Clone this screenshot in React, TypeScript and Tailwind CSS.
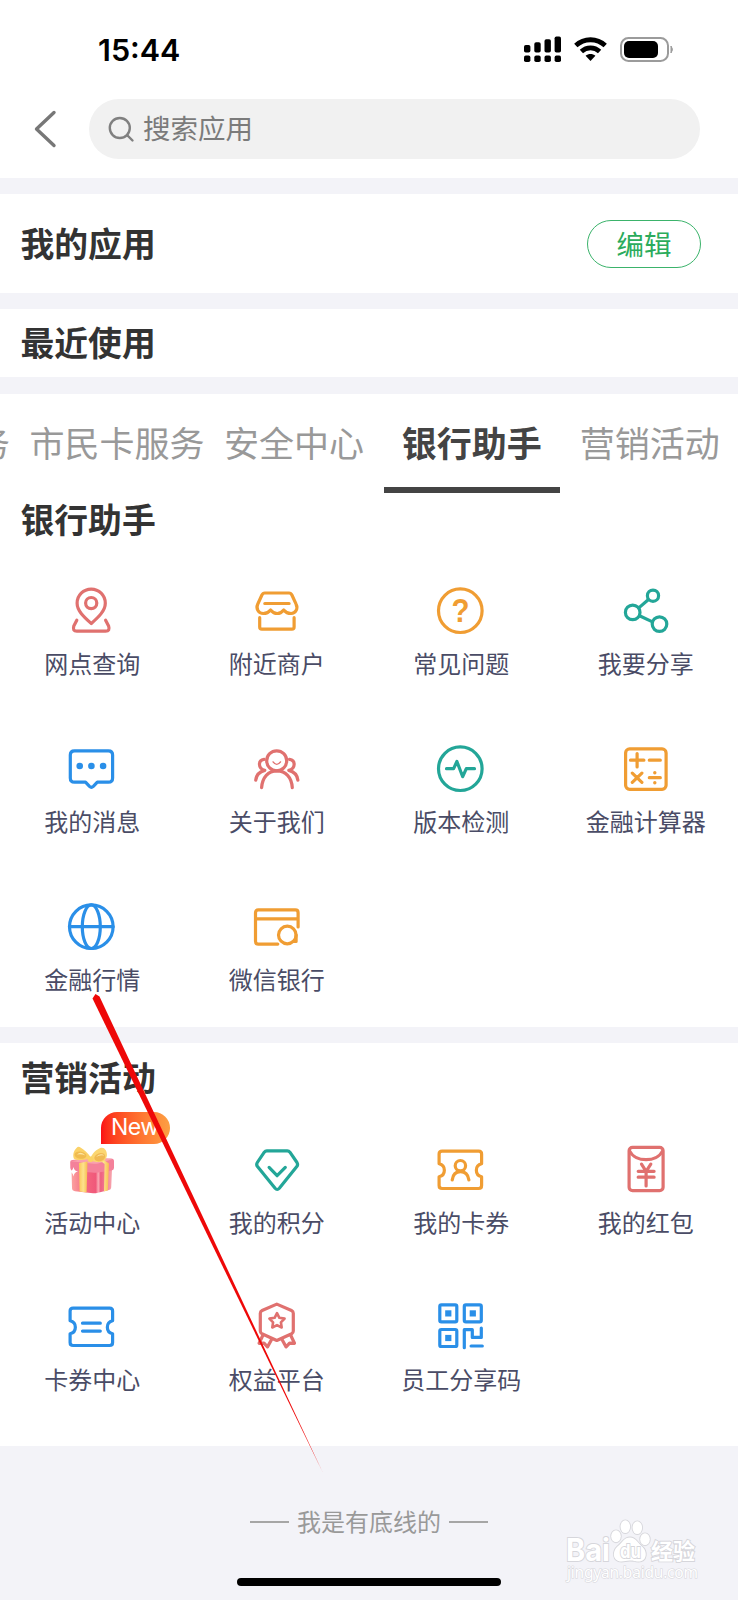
import type { ReactNode } from "react";
import clsx from "clsx";

type AppItem = {
  name: string;
  color: string;
  icon: ReactNode;
  isNew?: boolean;
};

const RED = "text-[#e0716f]";
const ORANGE = "text-[#f09d33]";
const GREEN = "text-[#23a698]";
const BLUE = "text-[#2a8fe8]";

const ticketOutline =
  "M5.8 5.4H42.3Q45.3 5.4 45.3 8.4V18C38.3 19.5 38.3 29.5 45.3 31V39.8Q45.3 42.8 42.3 42.8H5.8Q2.8 42.8 2.8 39.8V31C9.8 29.5 9.8 19.5 2.8 18V8.4Q2.8 5.4 5.8 5.4Z";

const bankItems: AppItem[] = [
  {
    name: "网点查询",
    color: RED,
    icon: (
      <>
        <path d="M24 36.8C17 30.5 9.8 24.2 9.8 16.5a14 14 0 0 1 28.2 0C38 24.2 31 30.5 24 36.8z" />
        <circle cx="23.9" cy="16.4" r="5.6" />
        <path d="M9.5 33.5L6.5 39.3Q5 44.5 9.5 44.5H38.3Q43 44.5 41.3 39.3L38.3 33.5" />
      </>
    ),
  },
  {
    name: "附近商户",
    color: ORANGE,
    icon: (
      <>
        <path d="M12.5 6.3H36.7Q38.7 6.3 39.6 8.3L43.8 17.5C46 22 43.2 26.8 38.8 26.8C35.5 26.8 33.3 25.6 31.4 23.2C29.5 25.6 27.5 26.8 24.9 26.8C22.3 26.8 20.3 25.6 18.3 23.2C16.4 25.6 14.2 26.8 10.9 26.8C6.3 26.8 3.3 22 5.4 17.5L9.6 8.3Q10.5 6.3 12.5 6.3Z" />
        <path d="M12.5 16.8H36.8M7.4 31V40.3Q7.4 42.5 9.6 42.5H39.6Q41.8 42.5 41.8 40.3V31" />
      </>
    ),
  },
  {
    name: "常见问题",
    color: ORANGE,
    icon: (
      <>
        <circle cx="24" cy="24" r="21.8" />
        <text
          x="24.2"
          y="35.6"
          textAnchor="middle"
          fontSize="33"
          fontWeight="700"
          fontFamily="Liberation Sans, sans-serif"
          fill="currentColor"
          stroke="none"
          textLength="18"
          lengthAdjust="spacingAndGlyphs"
        >
          ?
        </text>
      </>
    ),
  },
  {
    name: "我要分享",
    color: GREEN,
    icon: (
      <>
        <circle cx="11.4" cy="25.7" r="7.3" />
        <circle cx="31.7" cy="9" r="5.6" />
        <circle cx="38.2" cy="37.4" r="7.3" />
        <path d="M17.5 21.2L26.9 13M18.2 29L31.2 35.2" />
      </>
    ),
  },
  {
    name: "我的消息",
    color: BLUE,
    icon: (
      <>
        <path d="M7.2 6.2H41.1Q45.3 6.2 45.3 10.4V33.3Q45.3 37.5 41.1 37.5H30L26 41.7Q24.1 43.5 22.2 41.7L18.2 37.5H7.2Q3 37.5 3 33.3V10.4Q3 6.2 7.2 6.2Z" />
        <g fill="currentColor" stroke="none">
          <circle cx="12.4" cy="21.3" r="3.3" />
          <circle cx="24.1" cy="21.3" r="3.3" />
          <circle cx="35.8" cy="21.3" r="3.3" />
        </g>
      </>
    ),
  },
  {
    name: "关于我们",
    color: RED,
    icon: (
      <>
        <circle cx="24.4" cy="16.1" r="10" />
        <path d="M20.8 17.2Q24.4 22.2 28.2 17.2" strokeWidth="1.4" />
        <path d="M9.3 43C10 32.5 16 26.2 24.6 26.2S39.4 32.5 40 43" />
        <path d="M11.8 14.7C5.5 15.5 5.5 24 12.5 25.7C7 27 4 30.5 3.4 35.5M37.2 14.7C43.5 15.5 43.5 24 36.5 25.7C42 27 45 30.5 45.6 35.5" />
      </>
    ),
  },
  {
    name: "版本检测",
    color: GREEN,
    icon: (
      <>
        <circle cx="24" cy="24" r="21.8" />
        <path d="M10.2 24H17.3L20.6 16.8L26.4 32L30 24H38.2" />
      </>
    ),
  },
  {
    name: "金融计算器",
    color: ORANGE,
    icon: (
      <>
        <rect x="4.3" y="4.2" width="40.5" height="40.4" rx="4" />
        <path d="M9.2 15.5H22.6M15.8 8.8V22.2M28 15.5H39M11 28.4L20.6 37.6M20.6 28.4L11 37.6M28 33H39" />
        <g fill="currentColor" stroke="none">
          <circle cx="33.5" cy="28" r="1.7" />
          <circle cx="33.5" cy="38" r="1.7" />
        </g>
      </>
    ),
  },
  {
    name: "金融行情",
    color: BLUE,
    icon: (
      <>
        <circle cx="24" cy="24" r="21.8" />
        <ellipse cx="24" cy="24" rx="9" ry="21.8" />
        <path d="M2.2 24H45.8" />
      </>
    ),
  },
  {
    name: "微信银行",
    color: ORANGE,
    icon: (
      <>
        <path d="M45.8 24.3V10Q45.8 7.2 43 7.2H6Q3.2 7.2 3.2 10V38.6Q3.2 41.4 6 41.4H25.5M3.2 16.2H45.8" />
        <circle cx="35" cy="32.3" r="8.8" />
        <path d="M43.8 32.3V38.8H41" />
      </>
    ),
  },
];

const marketingItems: AppItem[] = [
  { name: "活动中心", color: RED, icon: null, isNew: true },
  {
    name: "我的积分",
    color: GREEN,
    icon: (
      <>
        <path d="M14.5 5.2H35Q36.6 5.2 37.6 6.5L44.7 16.8Q46 18.8 44.5 20.8L27 42.6Q24.9 45 22.8 42.6L5.2 20.8Q3.7 18.8 5 16.8L12 6.5Q13 5.2 14.5 5.2Z" />
        <path d="M16.8 21.7L24.8 30L33 21.7" />
      </>
    ),
  },
  {
    name: "我的卡券",
    color: ORANGE,
    icon: (
      <>
        <path d={ticketOutline} />
        <circle cx="24.1" cy="20" r="5.2" />
        <path d="M15.9 34.3C16.6 28.8 19.8 26 24.2 26S31.8 28.8 32.6 34.3" />
      </>
    ),
  },
  {
    name: "我的红包",
    color: RED,
    icon: (
      <>
        <rect x="7.8" y="1.6" width="34" height="43.4" rx="3.4" />
        <path d="M8.4 5.4C14 16.8 35.5 16.8 41.2 5.4" />
        <path d="M20.2 18.5L24.8 25.6L29.5 18.5M24.8 25.6V40.2M16.9 25.6H32.8M16.9 31.5H32.8" />
      </>
    ),
  },
  {
    name: "卡券中心",
    color: BLUE,
    icon: (
      <>
        <path d={ticketOutline} />
        <path d="M15.2 20.5H33M15.2 28.4H33" />
      </>
    ),
  },
  {
    name: "权益平台",
    color: RED,
    icon: (
      <>
        <path d="M24.5 1.4L39.2 7.8Q41 8.6 41 10.6V28.4Q41 30.2 39.4 31L24.5 37.8L9.6 31Q8 30.2 8 28.4V10.6Q8 8.6 9.8 7.8Z" />
        <path
          d="M24.7 10.4L27.1 15.1L32.3 15.9L28.6 19.6L29.4 24.8L24.7 22.4L20 24.8L20.8 19.6L17.1 15.9L22.3 15.1Z"
          strokeWidth="2.6"
        />
        <path d="M10.5 32.8L6.8 40.6L11.7 40.4L15.2 44.2L19.3 36.8M38.5 32.8L42.2 40.6L37.3 40.4L33.8 44.2L29.7 36.8" />
      </>
    ),
  },
  {
    name: "员工分享码",
    color: BLUE,
    icon: (
      <>
        <rect x="3.5" y="2.2" width="17" height="17" rx="1.6" />
        <rect x="28" y="2.2" width="17" height="17" rx="1.6" />
        <rect x="3.5" y="26.8" width="17" height="17" rx="1.6" />
        <path d="M28 45V27H36V34.7H45V25.4M34.8 43.3H46" />
        <g fill="currentColor" stroke="none">
          <rect x="8.9" y="7.6" width="6.2" height="6.2" />
          <rect x="33.4" y="7.6" width="6.2" height="6.2" />
          <rect x="8.9" y="32.2" width="6.2" height="6.2" />
        </g>
      </>
    ),
  },
];

function GiftIcon() {
  return (
    <svg viewBox="0 0 48 48" className="size-12">
      <defs>
        <linearGradient id="giftBox" x1="0" x2="1">
          <stop offset="0" stopColor="#fba3a0" />
          <stop offset="0.35" stopColor="#f4667f" />
          <stop offset="0.6" stopColor="#f0587a" />
          <stop offset="0.66" stopColor="#fba9b4" />
          <stop offset="0.72" stopColor="#ee5f80" />
          <stop offset="1" stopColor="#f7a6ae" />
        </linearGradient>
        <linearGradient id="giftRibbon" x1="0" x2="1">
          <stop offset="0" stopColor="#fbc95a" />
          <stop offset="0.5" stopColor="#fde28d" />
          <stop offset="1" stopColor="#f7bd51" />
        </linearGradient>
      </defs>
      <path d="M3.5 24H44L43.2 41.5Q43 43.5 41 44L29 47Q27 47.4 25 47.2L7 45.2Q4 44.8 4 42Z" fill="url(#giftBox)" />
      <path d="M2.2 16Q2.2 14 4.5 14L20 12L43 12.4Q46 12.5 46 15V22Q45.8 24.3 43.6 24.5L30 26.4Q27 26.8 24 26.6L5 25Q2.4 24.6 2.3 22Z" fill="#f4819a" />
      <path d="M3 15.2L20 12L44.5 13.2L30 17.4Q27 18 23 17.6Z" fill="#f9a2ae" />
      <path d="M11 17L19.5 15.5L18.6 46.4L11.6 45.6Z" fill="url(#giftRibbon)" />
      <path d="M36 14L41 17.5L39.8 44.4L36 45.4L36.6 18L30 13Z" fill="url(#giftRibbon)" />
      <path d="M21 12.5C15 14.5 8 14.5 5.8 12.5C4.4 8 6 4 9.5 1Q11 .2 12.5 1.6C16.5 3.8 20 7.5 22.5 11Z" fill="#fbd268" />
      <path d="M22 12.5C24.5 7.5 28 3.5 33 1.8Q36 1.2 37.6 4C39.6 7.5 39.6 12 36 15C31 17 26 16 22 14Z" fill="#fbd671" />
      <ellipse cx="12.5" cy="9.2" rx="6" ry="3.6" fill="#f0bb50" transform="rotate(8 12.5 9.2)" />
      <ellipse cx="31.8" cy="11.2" rx="5.6" ry="4" fill="#f0b952" transform="rotate(-18 31.8 11.2)" />
      <path d="M9 8.5Q13 4.5 17.5 9.5Q13 7.5 9 8.5ZM28 11Q32 6.5 36.5 9.5Q32 8.5 28 11Z" fill="#fde8a6" />
      <ellipse cx="22.5" cy="13.3" rx="3" ry="2.8" fill="#fbd365" />
      <path d="M5.5 21Q6.2 25 10 25.6Q6.2 26.4 5.5 30.4Q4.8 26.4 1 25.6Q4.8 25 5.5 21Z" fill="#fff" />
    </svg>
  );
}

function StatusBar() {
  return (
    <div className="flex h-[98px] items-start justify-between pl-[98px] pr-[64px]">
      <span className="mt-[32px] font-[Inter,sans-serif] text-[30.5px] leading-[36px] font-semibold text-black">
        15:44
      </span>
      <div className="mt-[36px] flex items-center gap-[13px]">
        {/* Signal */}
        <svg width="37" height="26" viewBox="0 0 37 26">
          <rect x="0" y="9" width="6.4" height="7.5" rx="1.8" />
          <rect x="10.3" y="6.3" width="6.4" height="10.2" rx="1.8" />
          <rect x="20.5" y="3.3" width="6.4" height="13.2" rx="1.8" />
          <rect x="30.6" y="0.5" width="6.4" height="16" rx="1.8" />
          <rect x="0" y="19.6" width="6.4" height="6.4" rx="1.8" />
          <rect x="10.3" y="19.6" width="6.4" height="6.4" rx="1.8" />
          <rect x="20.5" y="19.6" width="6.4" height="6.4" rx="1.8" />
          <rect x="30.6" y="19.6" width="6.4" height="6.4" rx="1.8" />
        </svg>
        {/* Wifi */}
        <svg width="33" height="25" viewBox="0 0 33 25" fill="none" stroke="#000" strokeWidth="4.8">
          <path d="M1.8 8.6C10 .8 23 .8 31.2 8.6" />
          <path d="M7.4 14.5C12.6 9.7 20.4 9.7 25.6 14.5" />
          <path d="M11.6 18.8C14.4 16.3 18.6 16.3 21.4 18.8L16.5 24Z" fill="#000" stroke="none" />
        </svg>
        {/* Battery */}
        <svg width="54" height="25" viewBox="0 0 54 25">
          <rect x="1" y="1" width="47" height="23" rx="7.5" fill="none" stroke="#9b9b9b" strokeWidth="2" />
          <rect x="4" y="4" width="34" height="17" rx="5" />
          <path d="M51 9Q54 12.5 51 16Z" fill="#9b9b9b" stroke="#9b9b9b" />
        </svg>
      </div>
    </div>
  );
}

function SectionTitle({ children }: { children: ReactNode }) {
  return <h2 className="pb-[3px] text-[33.8px] leading-[37px] font-semibold text-[#333]">{children}</h2>;
}

function AppGrid({ items }: { items: AppItem[] }) {
  return (
    <div className="grid grid-cols-4">
      {items.map((item) => (
        <div key={item.name} className="relative flex h-[157.75px] flex-col items-center">
          {item.isNew ? (
            <GiftIcon />
          ) : (
            <svg
              viewBox="0.7 0.3 48 48"
              fill="none"
              stroke="currentColor"
              strokeWidth="3.2"
              strokeLinecap="round"
              strokeLinejoin="round"
              className={clsx("size-12 overflow-visible", item.color)}
            >
              {item.icon}
            </svg>
          )}
          <span className="mt-[12px] text-[24px] leading-[32px] whitespace-nowrap text-[#4a4c66]">
            {item.name}
          </span>
          {item.isNew && (
            <span className="absolute -top-[34px] left-[101px] flex h-8 w-[69px] items-center rounded-t-2xl rounded-br-2xl bg-linear-to-r from-[#fb0d15] to-[#fca043] pl-[10px] font-[Inter,sans-serif] text-[23px] tracking-[-0.5px] text-white">
              New
            </span>
          )}
        </div>
      ))}
    </div>
  );
}

function Watermark() {
  return (
    <svg
      width="160"
      height="80"
      viewBox="0 0 160 80"
      className="absolute top-[1510px] left-[555px]"
      fill="#fff"
      stroke="#d6d6db"
      strokeWidth="1.8"
      paintOrder="stroke"
    >
      <text x="11" y="51" fontSize="31" fontWeight="700" fontFamily="Inter, sans-serif" textLength="44" lengthAdjust="spacingAndGlyphs">
        Bai
      </text>
      <ellipse cx="61" cy="26.3" rx="4.8" ry="6" />
      <ellipse cx="70.3" cy="16.7" rx="4.8" ry="6.4" />
      <ellipse cx="82.3" cy="17.7" rx="4.8" ry="6.4" />
      <ellipse cx="90" cy="29.3" rx="4.8" ry="6" />
      <path d="M75 27.5C81 27.5 82.5 33 87 36.5C92.5 41 92.5 51.5 83.5 51.5C79 51.5 79 50.5 75 50.5S70 51.5 66.5 51.5C57.5 51.5 57 41.5 62.5 36.5C67.5 32.5 69 27.5 75 27.5Z" />
      <text x="65" y="48" fontSize="19" fontWeight="700" fontFamily="Inter, sans-serif" textLength="21" lengthAdjust="spacingAndGlyphs">
        du
      </text>
      <text x="96" y="49" fontSize="22" fontWeight="700">
        经验
      </text>
      <text x="12" y="68" fontSize="15.5" strokeWidth="1.1" fontFamily="Noto Sans, sans-serif" textLength="131">
        jingyan.baidu.com
      </text>
    </svg>
  );
}

export default function App() {
  const tabs = ["务", "市民卡服务", "安全中心", "银行助手", "营销活动"];
  const activeTab = "银行助手";

  return (
    <div className="relative h-[1600px] w-[738px] overflow-hidden bg-[#f3f3f8] font-['Noto_Sans_CJK_SC',sans-serif]">
      {/* Header */}
      <header className="h-[178px] bg-white">
        <StatusBar />
        <div className="flex items-center pt-px pr-[38px] pl-[33px]">
          <svg width="24" height="38" viewBox="0 0 24 38" fill="none" stroke="#777" strokeWidth="3.4" strokeLinecap="round" strokeLinejoin="round">
            <path d="M21 2.5L3.5 19L21 35.5" />
          </svg>
          <div className="ml-8 flex h-[60px] flex-1 items-center rounded-full bg-[#f1f1f1] pl-[19px]">
            <svg width="27" height="27" viewBox="0 0 27 27" fill="none" stroke="#808080" strokeWidth="2.4" strokeLinecap="round">
              <circle cx="11.8" cy="12" r="10" />
              <path d="M19.5 19.5L24.5 24.5" />
            </svg>
            <span className="ml-2 pb-[4px] text-[27.5px] leading-[40px] text-[#7b7b7b]">搜索应用</span>
          </div>
        </div>
      </header>

      {/* My apps */}
      <section className="mt-4 flex h-[99px] items-center justify-between bg-white pr-[37px] pl-[20.5px]">
        <SectionTitle>我的应用</SectionTitle>
        <button className="h-[48px] w-[114px] rounded-full border border-[#3bb36b] pb-[2px] text-[27.5px] leading-[44px] text-[#2bab5c]">
          编辑
        </button>
      </section>

      {/* Recently used */}
      <section className="mt-4 flex h-[68px] items-center bg-white pl-[20.5px]">
        <SectionTitle>最近使用</SectionTitle>
      </section>

      {/* Bank helper */}
      <section className="mt-[17px] h-[632.5px] bg-white">
        <nav className="-ml-[25px] flex h-[99px] w-[780px] gap-[19.5px] text-[35px] leading-[40px] whitespace-nowrap">
          {tabs.map((tab) => (
            <div
              key={tab}
              className={clsx(
                "h-[99px] shrink-0 pt-[27.5px]",
                tab === activeTab
                  ? "border-b-[6px] border-[#444] px-[18.3px] font-semibold text-[#444]"
                  : "text-[#999]"
              )}
            >
              {tab}
            </div>
          ))}
        </nav>
        <div className="mt-[7px] mb-[47px] pl-[20.5px]">
          <SectionTitle>银行助手</SectionTitle>
        </div>
        <AppGrid items={bankItems} />
      </section>

      {/* Marketing */}
      <section className="mt-4 h-[403.5px] bg-white pt-[15.5px]">
        <div className="mb-[47.5px] pl-[20.5px]">
          <SectionTitle>营销活动</SectionTitle>
        </div>
        <AppGrid items={marketingItems} />
      </section>

      {/* Footer */}
      <footer className="flex flex-col items-center">
        <div className="mt-[59px] flex items-center gap-[8px] text-[24px] leading-[34px] text-[#999]">
          <span className="h-[2px] w-[39px] bg-[#a6a6a6]" />
          <span className="pb-[3px] leading-[31px]">我是有底线的</span>
          <span className="h-[2px] w-[39px] bg-[#a6a6a6]" />
        </div>
        <div className="mt-[39px] h-[8px] w-[264px] rounded-full bg-black" />
      </footer>

      <Watermark />

      {/* Pointer */}
      <svg width="738" height="1600" viewBox="0 0 738 1600" className="pointer-events-none absolute top-0 left-0" fill="#ee0808">
        <path d="M95.5 994L99.5 996.5L323 1473L92.5 998.5Z" />
      </svg>
    </div>
  );
}
